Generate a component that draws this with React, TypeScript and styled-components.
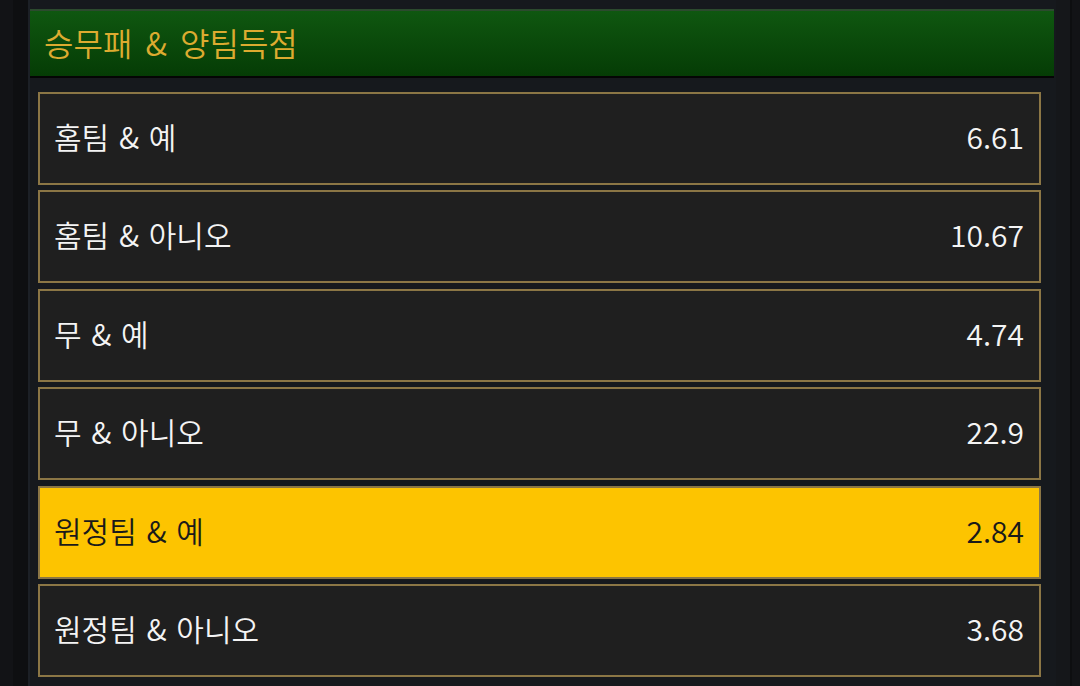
import React from "react";
import styled, { createGlobalStyle } from "styled-components";

const Global = createGlobalStyle`
  html, body { margin: 0; padding: 0; background: #121316; }
  body { font-family: "Noto Sans CJK KR", "Noto Sans", sans-serif; }
  #root { height: 686px; overflow: hidden; }
`;

const Page = styled.div`
  display: flex;
  height: 686px;
  background: #121316;
`;

const LeftGutter = styled.div`
  width: 15px;
  margin-left: 13px;
  background: #0e0f11;
  border-right: 2px solid #1c2026;
`;

const Panel = styled.div`
  width: 1026px;
  background: #16191d;
  padding-top: 9px;
  display: flex;
  flex-direction: column;
`;

const RightGutter = styled.div`
  width: 14px;
  background: #15171a;
  border-right: 2px solid #0d0e10;
`;

const Header = styled.div`
  margin-right: 2px;
  height: 69px;
  box-sizing: border-box;
  border-top: 2px solid #2c4a2e;
  border-bottom: 2px solid #050505;
  background: linear-gradient(#0f5710, #053c05);
  display: flex;
  align-items: center;
  padding: 0 0 3px 14px;
  color: #dcab30;
  font-size: 32px;
  font-weight: 350;
  word-spacing: 6px;
`;

const List = styled.div`
  display: flex;
  flex-direction: column;
  gap: 5.4px;
  padding: 14px 15px 0 8px;
`;

const Row = styled.div<{ $active?: boolean }>`
  height: 93px;
  box-sizing: border-box;
  border: 2px solid #8b7645;
  background: ${(p) => (p.$active ? "#fdc400" : "#1f1f1f")};
  color: ${(p) => (p.$active ? "#1a1a1a" : "#f4f4f4")};
  display: flex;
  align-items: center;
  justify-content: space-between;
  padding: 0 15px 5px 14px;
  font-size: 30px;
  font-weight: 350;
  word-spacing: 3px;
`;

const Label = styled.span``;
const Odds = styled.span``;

const rows = [
  { label: "홈팀 & 예", odds: "6.61" },
  { label: "홈팀 & 아니오", odds: "10.67" },
  { label: "무 & 예", odds: "4.74" },
  { label: "무 & 아니오", odds: "22.9" },
  { label: "원정팀 & 예", odds: "2.84", active: true },
  { label: "원정팀 & 아니오", odds: "3.68" },
];

export default function App() {
  return (
    <>
      <Global />
      <Page>
        <LeftGutter />
        <Panel>
          <Header>승무패 &amp; 양팀득점</Header>
          <List>
            {rows.map((r) => (
              <Row key={r.label} $active={r.active}>
                <Label>{r.label}</Label>
                <Odds>{r.odds}</Odds>
              </Row>
            ))}
          </List>
        </Panel>
        <RightGutter />
      </Page>
    </>
  );
}
